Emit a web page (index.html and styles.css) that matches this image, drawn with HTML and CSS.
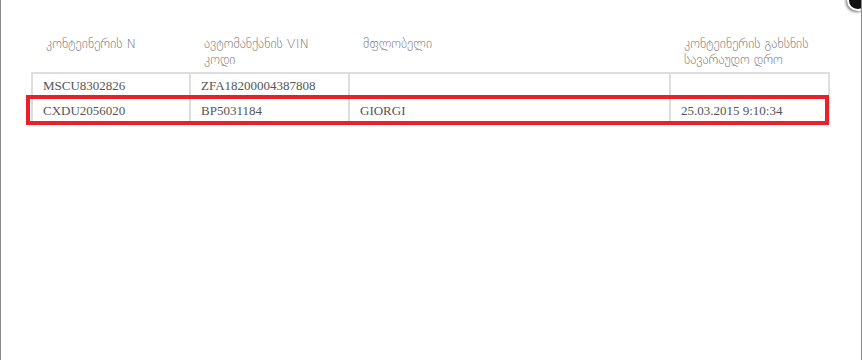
FILE: index.html
```html
<!DOCTYPE html>
<html>
<head>
<meta charset="utf-8">
<link rel="stylesheet" href="styles.css">
</head>
<body>
<div class="dialog">
  <div class="close"></div>
  <div class="grid">
    <div class="head">
      <div class="th">კონტეინერის N</div>
      <div class="th">ავტომანქანის VIN კოდი</div>
      <div class="th">მფლობელი</div>
      <div class="th">კონტეინერის გახსნის სავარაუდო დრო</div>
    </div>
    <div class="row">
      <div class="td">MSCU8302826</div>
      <div class="td">ZFA18200004387808</div>
      <div class="td"></div>
      <div class="td"></div>
    </div>
    <div class="row selected last">
      <div class="td">CXDU2056020</div>
      <div class="td">BP5031184</div>
      <div class="td">GIORGI</div>
      <div class="td">25.03.2015 9:10:34</div>
    </div>
  </div>
</div>
</body>
</html>
```

FILE: styles.css
```css
html, body {
  margin: 0;
  padding: 0;
  background: #fff;
}
.dialog {
  position: relative;
  height: 360px;
  box-sizing: border-box;
  border-left: 1px solid #8a8a8a;
  border-right: 1px solid #8a8a8a;
  padding: 36px 0 0 30px;
  overflow: hidden;
}
.close {
  position: absolute;
  right: -7px;
  top: -10px;
  width: 17px;
  height: 17px;
  border-radius: 50%;
  background: #111;
  border: 2px solid #fff;
  box-shadow: -1px 1px 3px rgba(0,0,0,0.6);
}
.grid {
  width: 799px;
}
.head, .row {
  display: grid;
  grid-template-columns: 158px 159px 321px 161px;
}
.th {
  font-family: "DejaVu Sans", sans-serif;
  font-weight: 200;
  font-size: 13px;
  line-height: 16px;
  color: #7a7a7a;
  padding: 0 6px 4px 15px;
}
.row {
  position: relative;
  border-top: 2px solid #dedede;
}
.row.last {
  border-bottom: 2px solid #dedede;
}
.td {
  font-family: "Liberation Serif", serif;
  font-size: 13px;
  color: #555;
  height: 23px;
  line-height: 23px;
  padding-left: 10px;
  border-left: 2px solid #dedede;
}
.td:last-child {
  border-right: 2px solid #dedede;
}
.row.selected::after {
  content: "";
  position: absolute;
  left: -5px;
  right: 1px;
  top: -4px;
  bottom: -3px;
  border: 4px solid #e8202a;
}
```
